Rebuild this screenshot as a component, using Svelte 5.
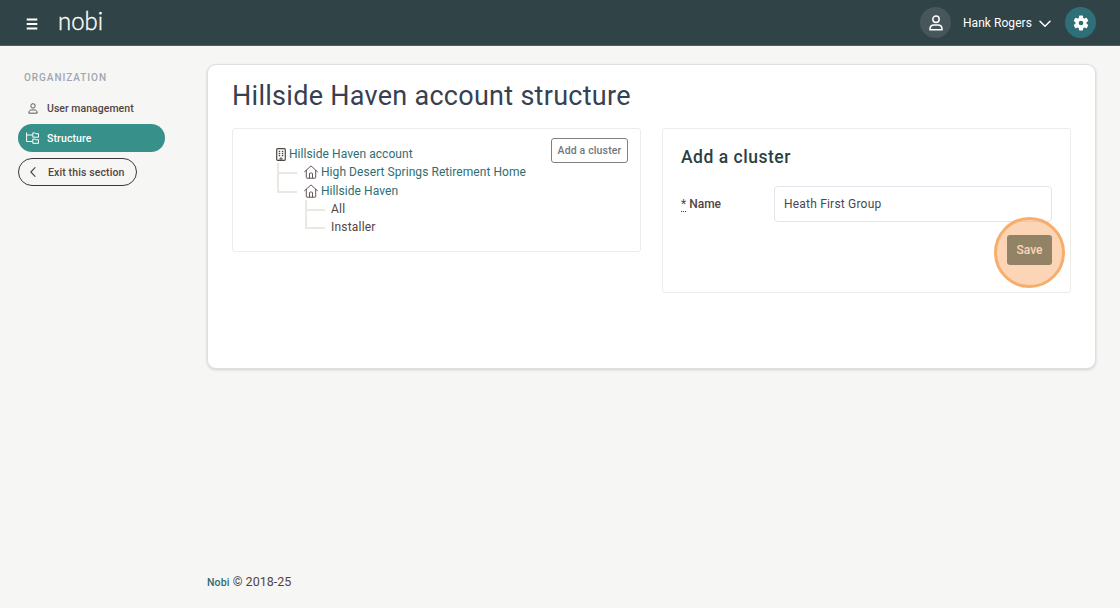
<script>
  let userName = 'Hank Rogers';
  let clusterName = 'Heath First Group';
  let groups = ['All', 'Installer'];
</script>

{#snippet house()}
  <svg class="house" viewBox="0 0 14 14" fill="none" stroke="currentColor" stroke-width="0.9" stroke-linecap="round" stroke-linejoin="round">
    <path d="M.6 6.7 7 .9l6.4 5.8M2.3 5.4v7.1q0 .7.7.7h8q.7 0 .7-.7V5.4M5.500 13V8.700q0-.6.6-.6h1.800q.6 0 .6.6V13" />
  </svg>
{/snippet}

{#snippet person()}
  <svg class="person" viewBox="0 0 14 16" fill="none" stroke="currentColor" stroke-linejoin="round">
    <circle cx="7" cy="4.2" r="3.2" />
    <path d="M.9 14.8c0-3.3 1.7-4.7 4.1-4.7h4c2.4 0 4.1 1.4 4.1 4.7z" />
  </svg>
{/snippet}

<header>
  <svg class="burger" viewBox="0 0 12 12" stroke="currentColor" stroke-width="1.9">
    <path d="M.7 1.5h10.6M.7 6h10.6M.7 10.5h10.6" />
  </svg>
  <svg class="logo" viewBox="0 0 48 26">
    <text x="0" y="20" textLength="45" lengthAdjust="spacingAndGlyphs">nobi</text>
  </svg>
  <div class="avatar">{@render person()}</div>
  <span class="user">{userName}</span>
  <svg class="chevron" viewBox="0 0 12 8" fill="none" stroke="currentColor" stroke-width="1.5" stroke-linecap="round" stroke-linejoin="round">
    <path d="m1 1.2 5 5 5-5" />
  </svg>
  <div class="settings">
    <svg viewBox="0 0 16 16">
      <g fill="#fff">
        <circle cx="8" cy="8" r="5.6" />
        {#each [0, 60, 120] as angle}
          <rect x="5.9" y=".5" width="4.2" height="15" rx="1" transform="rotate({angle} 8 8)" />
        {/each}
      </g>
      <circle cx="8" cy="8" r="2.3" fill="#2f6f77" />
    </svg>
  </div>
</header>

<div class="layout">
  <nav>
    <h6>ORGANIZATION</h6>
    <a class="item" href="#users">
      {@render person()}
      <span>User management</span>
    </a>
    <a class="item active" href="#structure">
      <svg class="tree-icon" viewBox="0 0 13 12" fill="none" stroke="currentColor" stroke-width="1">
        <path d="M.6.5v9h5.7M.6 3h5.7M6.8.9h2l.8.8h2.9v3.5H6.8zM6.8 7h2l.8.8h2.9v3.5H6.8z" />
      </svg>
      <span>Structure</span>
    </a>
    <a class="exit" href="#exit">
      <svg viewBox="0 0 6 10" fill="none" stroke="currentColor" stroke-width="1.1" stroke-linecap="round" stroke-linejoin="round">
        <path d="M5 .7.9 5 5 9.3" />
      </svg>
      <span>Exit this section</span>
    </a>
  </nav>

  <main>
    <section class="card">
      <h1>Hillside Haven account structure</h1>
      <div class="panels">
        <div class="panel structure-panel">
          <div class="tree">
            <div class="node">
              <svg class="building" viewBox="0 0 10 13" fill="none" stroke="currentColor">
                <rect x=".7" y=".7" width="8.6" height="11.6" rx="1" stroke-width="1.2" />
                <path d="M2.7 3.3h1.5M5.8 3.3h1.5M2.7 5.5h1.5M5.8 5.5h1.5M2.7 7.7h1.5M5.8 7.7h1.5" stroke-width="1.3" />
                <path d="M4.1 12v-2h1.8v2" />
              </svg>
              <a href="#account">Hillside Haven account</a>
            </div>
            <ul>
              <li><div class="node">{@render house()}<a href="#springs">High Desert Springs Retirement Home</a></div></li>
              <li>
                <div class="node">{@render house()}<a href="#haven">Hillside Haven</a></div>
                <ul class="groups">
                  {#each groups as group}
                    <li><div class="node">{group}</div></li>
                  {/each}
                </ul>
              </li>
            </ul>
          </div>
          <button class="add" type="button">Add a cluster</button>
        </div>

        <form class="panel">
          <h2>Add a cluster</h2>
          <div class="field">
            <label for="name"><abbr title="required">*</abbr> Name</label>
            <input id="name" type="text" bind:value={clusterName} />
          </div>
          <div class="actions">
            <button class="save" type="button">Save</button>
            <div class="click-marker"></div>
          </div>
        </form>
      </div>
    </section>
    <footer><a href="#nobi">Nobi</a> © 2018-25</footer>
  </main>
</div>

<style>
  :global(body) {
    background: #f6f6f4;
    font-family: Roboto, "Liberation Sans", sans-serif;
    font-size: 12px;
    color: #514544;
    overflow: hidden;
  }

  * {
    box-sizing: border-box;
  }

  a {
    color: #2d6e73;
    text-decoration: none;
  }

  svg {
    display: block;
    flex: none;
  }

  header {
    display: flex;
    align-items: center;
    height: 46px;
    padding: 0 24px 0 26px;
    background: #304347;
    border-bottom: 1px solid #526165;
    color: #fff;
  }

  .burger {
    width: 12px;
    height: 12px;
    margin-top: 3px;
  }

  .logo {
    width: 48px;
    height: 26px;
    margin-left: 20px;
    margin-right: auto;
    overflow: visible;
  }

  .logo text {
    font-family: Lato, sans-serif;
    font-size: 26px;
    font-weight: 300;
    fill: #fff;
    stroke: #fff;
    stroke-width: 0.4px;
  }

  .avatar,
  .settings {
    display: flex;
    align-items: center;
    justify-content: center;
    width: 31px;
    height: 31px;
    border-radius: 50%;
  }

  .avatar {
    background: #46565b;
  }

  .avatar .person {
    width: 14px;
    height: 16px;
    stroke-width: 1.5;
  }

  .user {
    width: 69px;
    margin-left: 12px;
    letter-spacing: 0.05px;
    white-space: nowrap;
  }

  .chevron {
    width: 12px;
    height: 8px;
    margin: 2px 14px 0 7px;
  }

  .settings {
    background: #2f6f77;
  }

  .settings svg {
    width: 16px;
    height: 16px;
  }

  .layout {
    display: flex;
    height: 562px;
    padding: 18px 24px 0 18px;
  }

  nav {
    width: 147px;
    margin-right: 42px;
    font-size: 10.5px;
    font-weight: 500;
    letter-spacing: 0.03px;
  }

  h6 {
    margin: 7px 0 9px 6px;
    font-size: 10px;
    font-weight: 500;
    line-height: 14px;
    letter-spacing: 0.95px;
    color: #a0a6b1;
  }

  .item {
    display: flex;
    align-items: center;
    height: 28px;
    padding-left: 8px;
    color: #514544;
    border-radius: 14px;
  }

  .item .person {
    width: 10px;
    height: 11px;
    margin: 0 9px 0 2px;
    stroke-width: 1.3;
    overflow: visible;
  }

  .active {
    margin-top: 2px;
    background: #37918a;
    color: #fff;
  }

  .tree-icon {
    width: 13px;
    height: 12px;
    margin-right: 8px;
  }

  .exit {
    display: flex;
    align-items: center;
    width: 119px;
    height: 28px;
    margin-top: 6px;
    padding-left: 11px;
    border: 1px solid #3d3838;
    border-radius: 14px;
    color: #514544;
  }

  .exit svg {
    width: 6px;
    height: 10px;
    margin-right: 12px;
  }

  .active span,
  .exit span {
    letter-spacing: 0.12px;
  }

  main {
    display: flex;
    flex: 1;
    flex-direction: column;
    justify-content: space-between;
  }

  .card {
    height: 305px;
    padding: 0 24px;
    background: #fff;
    border: 1px solid #dddfe3;
    border-radius: 9px;
    box-shadow: 0 1px 3px rgba(0, 0, 0, 0.16);
  }

  h1 {
    margin: 14px 0;
    font-size: 27px;
    font-weight: 400;
    line-height: 35px;
    letter-spacing: 0.28px;
    white-space: nowrap;
    color: #364151;
  }

  .panels {
    display: grid;
    grid-template-columns: 409px 409px;
    justify-content: space-between;
    align-items: start;
  }

  .panel {
    height: 165px;
    padding: 0 18px;
    border: 1px solid #ecece9;
    border-radius: 3px;
  }

  .structure-panel {
    display: flex;
    justify-content: space-between;
    height: 124px;
    padding: 9px 12px 0 43px;
  }

  .tree {
    padding-top: 7px;
    letter-spacing: 0.06px;
    white-space: nowrap;
  }

  .node {
    display: flex;
    align-items: center;
    height: 18.3px;
  }

  .building {
    width: 10px;
    height: 13px;
    margin-right: 3px;
  }

  .house {
    width: 14px;
    height: 14px;
    margin-right: 3px;
  }

  ul {
    margin: 0;
    padding: 0 0 0 2px;
    list-style: none;
  }

  li {
    position: relative;
    padding-left: 26px;
  }

  .groups li {
    padding-left: 25px;
    letter-spacing: 0.2px;
  }

  /* connector: vertical line down to this row, then the branch */
  li::before {
    content: '';
    position: absolute;
    left: -1px;
    top: 0;
    width: 18px;
    height: 9px;
    border: solid #e9e9e1;
    border-width: 0 0 2px 2px;
  }

  li:not(:last-child)::after {
    content: '';
    position: absolute;
    left: -1px;
    top: 0;
    height: 100%;
    border-left: 2px solid #e9e9e1;
  }

  .add {
    width: 77px;
    height: 25px;
    padding: 0;
    background: #fff;
    border: 1px solid #7d8285;
    border-radius: 3px;
    font-family: inherit;
    font-size: 10.5px;
    font-weight: 500;
    letter-spacing: 0.15px;
    color: #71777c;
    white-space: nowrap;
  }

  h2 {
    margin: 16px 0 17px;
    font-size: 17.5px;
    font-weight: 500;
    line-height: 24px;
    letter-spacing: 0.52px;
    color: #2b4043;
  }

  .field {
    display: flex;
    align-items: center;
  }

  label {
    width: 93px;
    font-weight: 500;
  }

  abbr {
    font-weight: 400;
    text-decoration: underline dotted 1px;
    text-underline-offset: 3px;
  }

  input {
    flex: 1;
    min-width: 0;
    height: 36px;
    padding: 0 9px;
    border: 1px solid #e2e4ec;
    border-radius: 4px;
    outline: none;
    font-family: inherit;
    font-size: 12px;
    letter-spacing: 0.2px;
    color: #46494f;
  }

  .actions {
    position: relative;
    display: flex;
    justify-content: flex-end;
    margin-top: 13px;
  }

  .save {
    width: 45px;
    height: 30px;
    padding: 0;
    background: #376568;
    border: 0;
    border-radius: 3px;
    font-family: inherit;
    font-size: 12px;
    font-weight: 500;
    color: #fff;
  }

  .click-marker {
    position: absolute;
    right: -13px;
    top: -18px;
    width: 71px;
    height: 71px;
    background: rgba(249, 165, 100, 0.47);
    border: 3px solid #f7ad6b;
    border-radius: 50%;
  }

  footer {
    height: 34px;
    font-size: 12.5px;
    line-height: 16px;
  }

  footer a {
    font-size: 10.5px;
    font-weight: 500;
    letter-spacing: 0.15px;
  }
</style>
